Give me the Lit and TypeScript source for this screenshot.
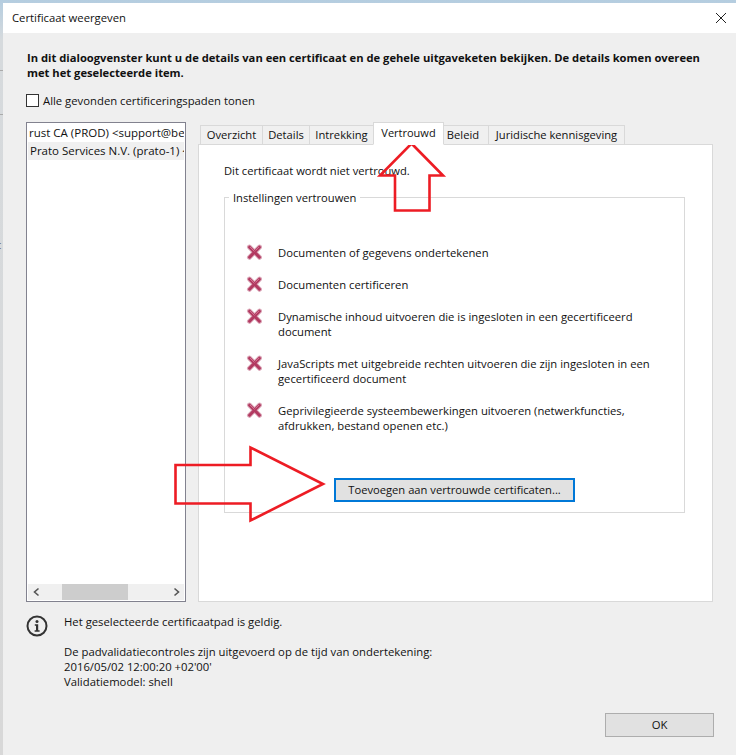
import { LitElement, html, css, svg } from "lit";
import { customElement } from "lit/decorators.js";

const tabs = ["Overzicht", "Details", "Intrekking", "Vertrouwd", "Beleid", "Juridische kennisgeving"];
const rows = [
  ["Documenten of gegevens ondertekenen"],
  ["Documenten certificeren"],
  ["Dynamische inhoud uitvoeren die is ingesloten in een gecertificeerd", "document"],
  ["JavaScripts met uitgebreide rechten uitvoeren die zijn ingesloten in een", "gecertificeerd document"],
  ["Geprivilegieerde systeembewerkingen uitvoeren (netwerkfuncties,", "afdrukken, bestand openen etc.)"],
];

const xIcon = svg`<svg class="xi" width="16" height="16" viewBox="0 0 16 16">
  <path d="M3.4 3 13.6 13.4M13.6 3 3.4 13.4" fill="none" stroke="#dba8b9" stroke-width="4.8" stroke-linecap="round"/>
  <path d="M3.6 3.2 13.4 13.2M13.4 3.2 3.6 13.2" fill="none" stroke="#b23a61" stroke-width="3" stroke-linecap="round"/>
  <path d="M4 3 8.5 7.5M13 3 9.5 6.5" fill="none" stroke="#d97f9c" stroke-width=".8"/>
</svg>`;

@customElement("app-root")
export class AppRoot extends LitElement {
  static styles = css`
    :host { display: block; width: 736px; height: 755px; position: relative; overflow: hidden;
      font-family: "Open Sans", "Noto Sans", sans-serif; font-size: 11.3px; line-height: 15px; color: #111;
      background: linear-gradient(to bottom, #b4cde0 0, #d6dadd 40px, #d8d8d8 100%); }
    * { box-sizing: border-box; }
    .tick { position: absolute; left: 0; width: 3px; height: 1px; background: #aaa; }
    .t1 { top: 70px; }
    .t2 { top: 114px; }
    .stray { position: absolute; left: -4px; top: 237px; color: #666; font-size: 11px; }
    .dialog { position: absolute; inset: 3px 0 0 3px; background: #efefef; display: flex; flex-direction: column; }
    .title { height: 30px; background: #fff; display: flex; align-items: center; justify-content: space-between; padding: 0 9px 1px 9px; flex: none; }
    .close { display: block; }
    .intro { margin: 17px 0 0 24px; font-weight: 700; font-size: 11.2px; height: 30px; white-space: nowrap; }
    .check { display: flex; align-items: center; gap: 4px; margin: 13px 0 0 23px; height: 14px; }
    .box { width: 13px; height: 13px; border: 1px solid #333; background: #fff; }
    .main { display: flex; margin: 15px 0 0 23px; height: 480px; flex: none; }
    .list { width: 160px; border: 1px solid #82828f; background: #fff; display: flex; flex-direction: column; height: 480px; padding: 1px; }
    .items { flex: 1; overflow: hidden; white-space: nowrap; font-size: 11.5px; }
    .item { height: 18px; line-height: 18px; padding-left: 1px; overflow: hidden; }
    .item.sel { background: #f0f0f0; padding-left: 2px; }
    .sb { height: 16px; background: #f0f0f0; display: flex; align-items: center; }
    .sb svg { display: block; flex: none; }
    .thumb { width: 66px; height: 16px; background: #cdcdcd; margin-left: 22px; margin-right: 45px; }
    .sb .l { margin-left: 5px; }
    .right { margin-left: 12px; width: 515px; display: flex; flex-direction: column; }
    .tabs { display: flex; align-items: flex-end; height: 23px; padding-left: 2px; position: relative; z-index: 1; margin-bottom: -1px; flex: none; }
    .tab { height: 20px; line-height: 18px; border: 1px solid #d9d9d9; margin-right: -1px; background: #f0f0f0; white-space: nowrap; text-align: center; font-size: 11.2px; }
    .tab:nth-child(1) { width: 63px; }
    .tab:nth-child(2) { width: 48px; }
    .tab:nth-child(3) { width: 65px; }
    .tab:nth-child(4) { width: 71px; font-size: 11px; }
    .tab:nth-child(5) { width: 46px; padding-right: 6px; }
    .tab:nth-child(6) { width: 137px; }
    .tab.active { height: 23px; background: #fff; border-bottom-color: #fff; position: relative; z-index: 2; line-height: 20px; }
    .panel { flex: 1; background: #fff; border: 1px solid #d9d9d9; padding: 18px 27px 0 25px; }
    .status { height: 15px; font-size: 11.2px; }
    .group { margin-top: 19px; height: 316px; border: 1px solid #d9d9d9; position: relative; padding: 47px 0 0 21px; }
    .legend { position: absolute; left: 4px; top: -8px; background: #fff; padding: 0 4px; font-size: 11.2px; }
    .row { display: flex; gap: 16px; margin-bottom: 17px; font-size: 11.25px; }
    .xi { flex: none; display: block; margin-top: -1px; }
    .row-text { white-space: nowrap; }
    .btnwrap { position: absolute; left: 109px; top: 280px; }
    .btn { width: 241px; height: 24px; border: 2px solid #0078d7; background: #e1e1e1; text-align: center; line-height: 19px; white-space: nowrap; font-size: 11.2px; }
    .bottom { display: flex; margin: 11px 0 0 23px; }
    .info { flex: none; display: block; margin-right: 16px; margin-top: 2px; }
    .bottom-text { white-space: nowrap; padding-top: 1px; }
    .gap { height: 15px; }
    .ok { margin: auto 22px 18px auto; width: 109px; height: 24px; border: 1px solid #adadad; background: #e1e1e1; text-align: center; line-height: 22px; flex: none; }
    .arrows { position: absolute; left: 0; top: 0; pointer-events: none; }
  `;

  render() {
    return html`
      <div class="tick t1"></div>
      <div class="tick t2"></div>
      <div class="stray">c</div>
      <div class="dialog">
        <div class="title">
          <span>Certificaat weergeven</span>
          <svg class="close" width="12" height="12" viewBox="0 0 12 12"><path d="M1 1l10 10M11 1 1 11" stroke="#222" stroke-width="1"/></svg>
        </div>
        <div class="intro">In dit dialoogvenster kunt u de details van een certificaat en de gehele uitgaveketen bekijken. De details komen overeen<br>met het geselecteerde item.</div>
        <div class="check"><div class="box"></div><span>Alle gevonden certificeringspaden tonen</span></div>
        <div class="main">
          <div class="list">
            <div class="items">
              <div class="item">rust CA (PROD) &lt;support@belgium.be&gt;</div>
              <div class="item sel">Prato Services N.V. (prato-1) &lt;info@prato.be&gt;</div>
            </div>
            <div class="sb">
              <svg class="l" width="7" height="16" viewBox="0 0 7 16"><path d="M5.5 4.5 1.5 8l4 3.5" fill="none" stroke="#555" stroke-width="1.6"/></svg>
              <div class="thumb"></div>
              <svg width="7" height="16" viewBox="0 0 7 16"><path d="M1.5 4.5 5.5 8l-4 3.5" fill="none" stroke="#555" stroke-width="1.6"/></svg>
            </div>
          </div>
          <div class="right">
            <div class="tabs">
              ${tabs.map((t) => html`<div class="tab ${t === "Vertrouwd" ? "active" : ""}">${t}</div>`)}
            </div>
            <div class="panel">
              <div class="status">Dit certificaat wordt niet vertrouwd.</div>
              <div class="group">
                <div class="legend">Instellingen vertrouwen</div>
                ${rows.map((r) => html`<div class="row">${xIcon}<div class="row-text">${r.map((l) => html`<div>${l}</div>`)}</div></div>`)}
                <div class="btnwrap"><div class="btn">Toevoegen aan vertrouwde certificaten...</div></div>
              </div>
            </div>
          </div>
        </div>
        <div class="bottom">
          <svg class="info" width="22" height="22" viewBox="0 0 22 22">
            <circle cx="11" cy="11" r="9.5" fill="none" stroke="#333" stroke-width="2"/>
            <circle cx="11" cy="6.6" r="1.5" fill="#333"/>
            <path d="M8.8 9.3h3.4v6h1.4v1.4H8.6v-1.4h1.4v-4.6H8.8z" fill="#333"/>
          </svg>
          <div class="bottom-text">
            <div>Het geselecteerde certificaatpad is geldig.</div>
            <div class="gap"></div>
            <div>De padvalidatiecontroles zijn uitgevoerd op de tijd van ondertekening:</div>
            <div>2016/05/02 12:00:20 +02'00'</div>
            <div>Validatiemodel: shell</div>
          </div>
        </div>
        <div class="ok">OK</div>
      </div>
      <svg class="arrows" width="736" height="755" viewBox="0 0 736 755">
        <path d="M411.5 143.5 443 175.5H429.5V210.5H395V175.5H380Z" fill="none" stroke="#ed1c24" stroke-width="2.6"/>
        <path d="M175.5 465H250.5V447.5L323 484 250.5 520.5V503.5H175.5Z" fill="none" stroke="#ed1c24" stroke-width="2.6"/>
      </svg>
    `;
  }
}
